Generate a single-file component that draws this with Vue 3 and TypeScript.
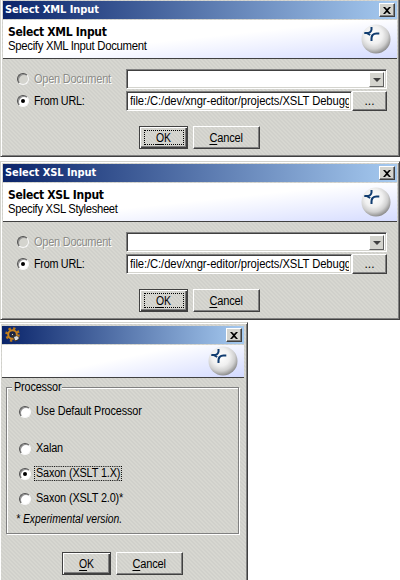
<script setup lang="ts">
import { ref } from 'vue'

interface InputDialog {
  title: string
  kind: string
  hint: string
  url: string
}

const dialogs: InputDialog[] = [
  { title: 'Select XML Input', kind: 'xml', hint: 'Specify XML Input Document', url: 'file:/C:/dev/xngr-editor/projects/XSLT Debugg' },
  { title: 'Select XSL Input', kind: 'xsl', hint: 'Specify XSL Stylesheet', url: 'file:/C:/dev/xngr-editor/projects/XSLT Debugg' },
]

const processors = [
  { id: 'default', label: 'Use Default Processor' },
  { id: 'xalan', label: 'Xalan' },
  { id: 'saxon1', label: 'Saxon (XSLT 1.X)' },
  { id: 'saxon2', label: 'Saxon (XSLT 2.0)*' },
]
const selected = ref('saxon1')
</script>

<template>
  <svg class="defs" width="0" height="0" aria-hidden="true">
    <defs>
      <radialGradient id="ball" cx="0.42" cy="0.36" r="0.64">
        <stop offset="0" stop-color="#ffffff" />
        <stop offset="0.48" stop-color="#f0f0f0" />
        <stop offset="0.76" stop-color="#d0d0d0" />
        <stop offset="1" stop-color="#909090" />
      </radialGradient>
      <symbol id="orb" viewBox="0 0 30 30">
        <circle cx="15" cy="15" r="14.5" fill="url(#ball)" />
        <path d="M10.500 3v2.500Q10.500 7 9 8.200T3.300 9M6 9.200L9.200 11M18.300 9.500H15.500Q13 9.500 11.600 11T10.500 17" fill="none" stroke="#103c70" stroke-width="2" />
      </symbol>
      <symbol id="cross" viewBox="0 0 8 7">
        <path d="M0 0h2l2 2 2-2h2L5 3.500 8 7H6L4 5 2 7H0l3-3.500z" fill="#000" />
      </symbol>
    </defs>
  </svg>
  <main class="screen">
    <section v-for="d in dialogs" :key="d.kind" class="dialog wide">
      <header class="titlebar">
        <span class="caption">{{ d.title }}</span>
        <button class="close" aria-label="Close"><svg width="8" height="7"><use href="#cross" /></svg></button>
      </header>
      <div class="banner">
        <div class="intro">
          <h2>{{ d.title }}</h2>
          <p :class="d.kind">{{ d.hint }}</p>
        </div>
        <svg class="orb" width="30" height="30"><use href="#orb" /></svg>
      </div>
      <div class="form">
        <div class="row first">
          <i class="radio off"></i>
          <span class="label dim">Open Document</span>
          <div class="combo"><span class="drop"><svg width="8" height="4"><path d="M0 0h8L4 4z" fill="#404040" /></svg></span></div>
        </div>
        <div class="row">
          <i class="radio on"></i>
          <span class="label from">From URL:</span>
          <div class="field"><div class="clip"><span>{{ d.url }}</span></div></div>
          <button class="btn browse">...</button>
        </div>
      </div>
      <footer class="actions">
        <button class="btn ok focused"><span><u>O</u>K</span></button>
        <button class="btn cancel"><span><u>C</u>ancel</span></button>
      </footer>
    </section>

    <section class="dialog small">
      <header class="titlebar">
        <svg class="gear" width="16" height="16" viewBox="0 0 16 16">
          <circle cx="7.500" cy="7.500" r="6" fill="none" stroke="#bd7a18" stroke-width="2.500" stroke-dasharray="2.300 2.400" />
          <circle cx="7.500" cy="7.500" r="4.300" fill="#172348" stroke="#c88420" stroke-width="2" />
          <path d="M6 7l2-1 1 2 4 1 2 3-3 2-3-1-1-3-2-1z" fill="#333" />
          <path d="M9 10l3-1 2 2-2 2h-2zM7 7h1v1H7z" fill="#ddd" />
        </svg>
        <button class="close" aria-label="Close"><svg width="8" height="7"><use href="#cross" /></svg></button>
      </header>
      <div class="banner short">
        <svg class="orb" width="30" height="30"><use href="#orb" /></svg>
      </div>
      <fieldset class="group">
        <legend><span>Processor</span></legend>
        <div v-for="p in processors" :key="p.id" class="option" :class="p.id" @click="selected = p.id">
          <i class="radio" :class="{ on: selected === p.id }"></i>
          <span class="name" :class="{ marked: selected === p.id }">{{ p.label }}</span>
        </div>
        <p class="note">* Experimental version.</p>
      </fieldset>
      <footer class="actions low">
        <button class="btn ok"><span><u>O</u>K</span></button>
        <button class="btn cancel"><span><u>C</u>ancel</span></button>
      </footer>
    </section>
  </main>
</template>

<style>
body { background: #fff; overflow: hidden; }
</style>

<style scoped>
* { box-sizing: border-box; }
.defs { position: absolute; }
.screen {
  --weave: linear-gradient(45deg, #d0d0cb 25%, transparent 25% 50%, #d0d0cb 50% 75%, transparent 75%) 0 0 / 4px 4px #d7d7d1;
  width: 400px; height: 580px; overflow: hidden; display: flex; flex-direction: column; gap: 4px;
  font: 12px/14px "Liberation Sans", sans-serif; color: #000;
}
.dialog {
  flex: none; border: 1px solid #d4d4ce; border-right-color: #404040; border-bottom-color: #404040;
  box-shadow: inset 1px 1px #fff, inset -1px -1px #808080;
  background: var(--weave);
  padding: 2px;
}
.wide { width: 400px; height: 159px; }
.wide:first-child { margin-top: -2px; }
.small { width: 249px; height: 262px; margin: -2px 0 0 -1px; padding-top: 3px; }
.titlebar {
  height: 18px; display: flex; align-items: center; padding: 0 2px;
  background: linear-gradient(90deg, #0a246a, #a6caf0);
}
.wide .titlebar { width: 394px; }
.small .titlebar { width: 242px; }
.caption { flex: 1; color: #fff; font: bold 11px/16px "DejaVu Sans Condensed", "DejaVu Sans", sans-serif; font-stretch: condensed; white-space: nowrap; letter-spacing: -0.050px; }
.gear { margin-right: auto; margin-left: 1px; }
.close {
  width: 16px; height: 14px; padding: 0; display: flex; align-items: center; justify-content: center;
  background: #d4d4ce; border: 1px solid #fff; border-right-color: #404040; border-bottom-color: #404040;
  box-shadow: inset -1px -1px #808080;
}
.banner {
  display: flex; justify-content: space-between; height: 39px; margin-top: 1px; width: 394px;
  padding: 4px 6px 0 5px; border-bottom: 1px solid #404040;
  background: linear-gradient(174deg, #fff 48%, #ccd4ff 112%);
}
.banner.short { height: 33px; width: 242px; padding-top: 1px; justify-content: flex-end; background: linear-gradient(168deg, #fff 46%, #ccd4ff 108%); }
.orb { flex: none; }
.intro { padding-top: 1px; }
h2 { margin: 0; font: bold 12px/14px "DejaVu Sans Condensed", "DejaVu Sans", sans-serif; font-stretch: condensed; letter-spacing: -0.300px; }
p { margin: 0; line-height: 14px; white-space: nowrap; transform-origin: left; }
.intro p { letter-spacing: -0.320px; transform: scaleX(0.945); }
.intro p.xsl { transform: scaleX(0.935); }
.form { padding: 10px 0 0 14px; display: flex; flex-direction: column; gap: 2px; }
.row { display: flex; align-items: center; height: 20px; }
.radio {
  flex: none; width: 12px; height: 12px; border-radius: 50%; background: #fff;
  border: 1px solid; border-color: #505050 #f8f8f8 #f8f8f8 #505050;
  box-shadow: inset 1px 1px #909090; display: flex; align-items: center; justify-content: center;
}
.radio.off { background: #d4d4ce; }
.radio.on::after { content: ""; width: 4px; height: 4px; border-radius: 50%; background: #000; }
.label { width: 92px; margin-left: 5px; white-space: nowrap; letter-spacing: -0.300px; transform: scaleX(0.92); transform-origin: left; }
.label.from { transform: scaleX(0.9); }
.dim { color: #8c8c88; text-shadow: 1px 1px #fff; }
.combo, .field {
  background: #fff; border: 1px solid; border-color: #808080 #fff #fff #808080;
  box-shadow: inset 1px 1px #404040, inset -1px -1px #d4d4ce; height: 20px;
}
.combo { width: 261px; display: flex; justify-content: flex-end; padding: 2px; }
.drop {
  width: 15px; height: 15px; display: flex; align-items: center; justify-content: center;
  background: #d4d4ce; border: 1px solid #fff; border-right-color: #606060; border-bottom-color: #606060;
}
.field { width: 226px; padding: 2px 2px 0 3px; }
.clip { overflow: hidden; height: 15px; }
.clip span { display: inline-block; white-space: nowrap; letter-spacing: -0.100px; transform: scaleX(0.937); transform-origin: left; }
.btn {
  font: 12px/14px "Liberation Sans", sans-serif; color: #000; padding: 0; display: flex; align-items: center; justify-content: center;
  background: var(--weave);
  border: 1px solid; border-color: #fff #404040 #404040 #fff; box-shadow: inset -1px -1px #808080; letter-spacing: -0.200px;
}
.btn span { display: inline-block; transform: scaleX(0.92); }
.browse { width: 35px; height: 20px; letter-spacing: 0; }
.actions { display: flex; gap: 5px; padding: 15px 0 0 136px; }
.actions.low { padding: 18px 0 0 60px; }
.ok { width: 49px; height: 23px; border-color: #404040; box-shadow: inset 1px 1px #fff, inset -1px -1px #404040, inset -2px -2px #808080; position: relative; }
.ok span { transform: scaleX(0.87); }
.focused::after { content: ""; position: absolute; inset: 3px 3px 3px 4px; border: 1px dotted #000; }
.cancel { width: 67px; height: 23px; }
u { text-underline-offset: 2px; }
.group {
  position: relative; margin: 2px 0 0 4px; width: 233px; height: 154px; padding: 0 0 0 12px;
  border: 1px solid #808080; box-shadow: inset 1px 1px #fff, 1px 1px #fff; min-width: 0;
}
legend { padding: 0 0 0 2px; margin-left: -7px; width: 50px; height: 14px; background: #d4d4ce; letter-spacing: -0.150px; }
legend span { display: inline-block; transform: scaleX(0.9); transform-origin: left; }
.option { display: flex; align-items: center; height: 15px; margin-bottom: 10px; }
.option.default { margin: 10px 0 22px; }
.name { margin-left: 4px; padding: 0 1px; white-space: nowrap; letter-spacing: -0.150px; line-height: 13px; transform: scaleX(0.905); transform-origin: left; }
.marked { outline: 1px dotted #000; outline-offset: 0; }
.note { font-style: italic; margin: -4px 0 0 -3px; transform: scaleX(0.86); }
</style>
